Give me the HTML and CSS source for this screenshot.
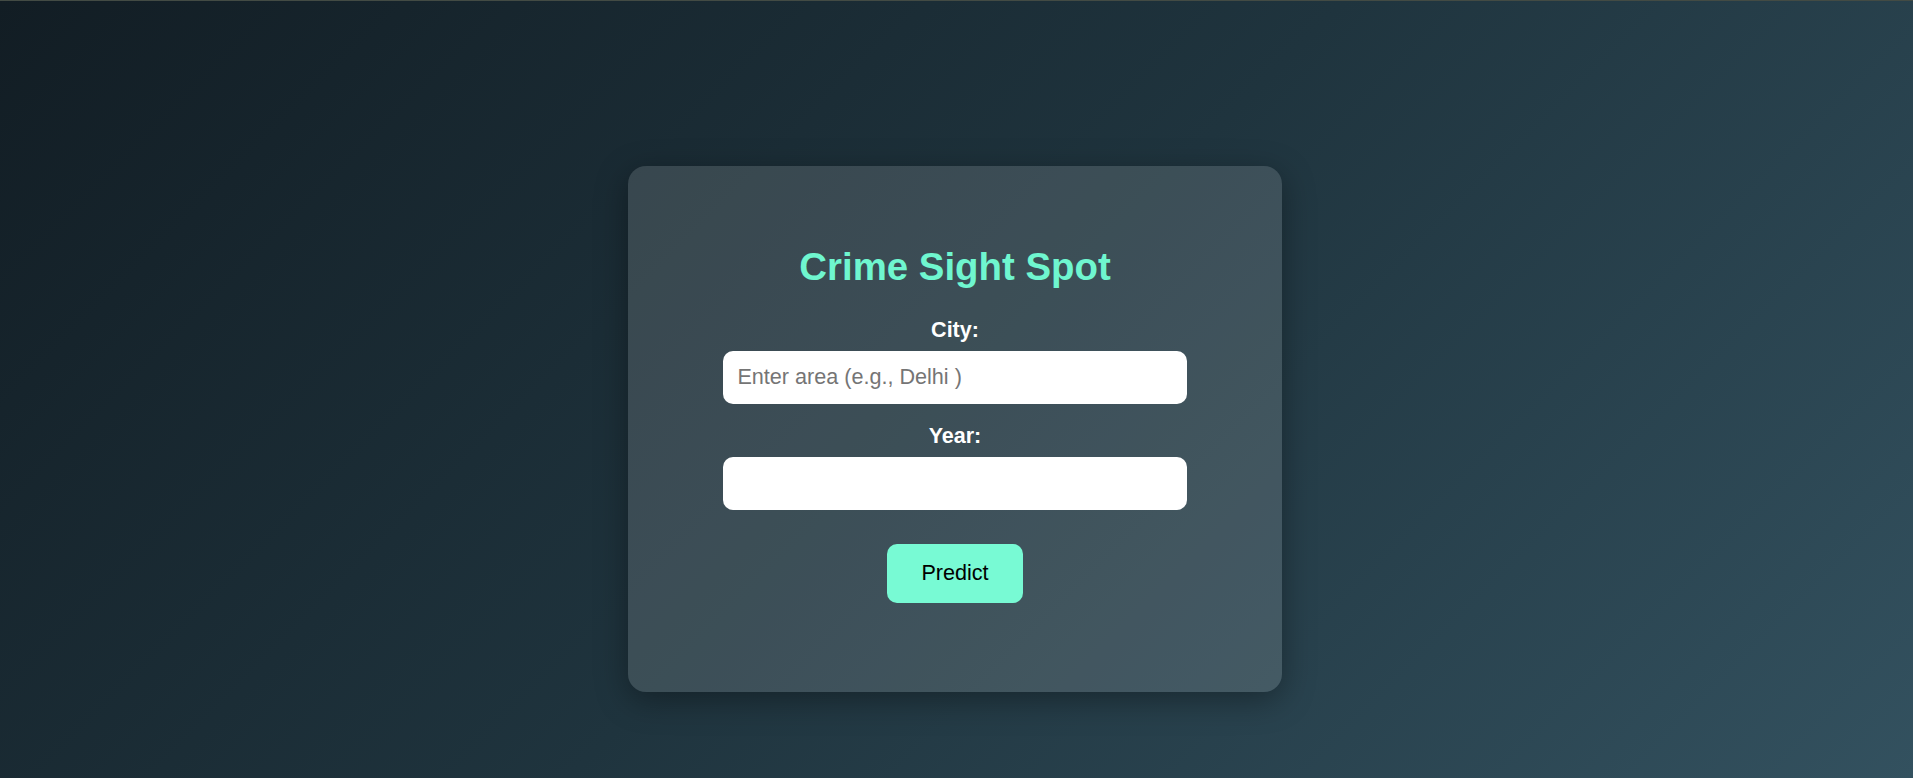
FILE: index.html
```html
<!DOCTYPE html>
<html lang="en">
<head>
<meta charset="utf-8">
<title>Crime Sight Spot</title>
<link rel="stylesheet" href="styles.css">
</head>
<body>
<div class="page">
  <div class="card">
    <h1 class="title">Crime Sight Spot</h1>
    <form class="form">
      <label class="label" for="city">City:</label>
      <input class="field" id="city" type="text" placeholder="Enter area (e.g., Delhi )">
      <label class="label" for="year">Year:</label>
      <input class="field" id="year" type="number">
      <button class="btn" type="button">Predict</button>
    </form>
  </div>
</div>
</body>
</html>
```

FILE: styles.css
```css
html, body {
  margin: 0;
  padding: 0;
  height: 100%;
}

body {
  font-family: "Liberation Sans", Arial, sans-serif;
  background: linear-gradient(135deg, #121d24 0%, #1f343e 50%, #33515f 100%);
  background-attachment: fixed;
}

.page {
  min-height: 100vh;
  box-sizing: border-box;
  border-top: 1px solid #434b44;
  padding-top: 165px;
  padding-right: 3px;
  display: flex;
  justify-content: center;
  align-items: flex-start;
}

.card {
  width: 654px;
  box-sizing: border-box;
  padding: 79px 0 89px;
  background: rgba(255, 255, 255, 0.135);
  border-radius: 18px;
  box-shadow: 0 8px 32px rgba(0, 0, 0, 0.35);
  display: flex;
  flex-direction: column;
  align-items: center;
}

.title {
  margin: 0 0 29px;
  font-size: 38.4px;
  line-height: 44px;
  font-weight: 700;
  color: #6ff6cf;
  text-align: center;
}

.form {
  width: 464px;
  display: flex;
  flex-direction: column;
  align-items: center;
}

.label {
  display: block;
  font-size: 21.5px;
  line-height: 24px;
  font-weight: 700;
  color: #ffffff;
  margin-bottom: 8.5px;
  text-align: center;
}

.field {
  width: 100%;
  height: 53px;
  box-sizing: border-box;
  padding: 0 14.4px;
  border: none;
  border-radius: 10px;
  background: #ffffff;
  font-family: "Liberation Sans", Arial, sans-serif;
  font-size: 21.6px;
  color: #222;
  outline: none;
  margin-bottom: 20.5px;
}

.field::placeholder {
  color: #757575;
}

.field:last-of-type {
  margin-bottom: 0;
}

.btn {
  margin-top: 34px;
  height: 59px;
  padding: 0 34.5px;
  border: none;
  border-radius: 10px;
  background: #78fad4;
  color: #000;
  font-family: "Liberation Sans", Arial, sans-serif;
  font-size: 21.6px;
  cursor: pointer;
}
```
